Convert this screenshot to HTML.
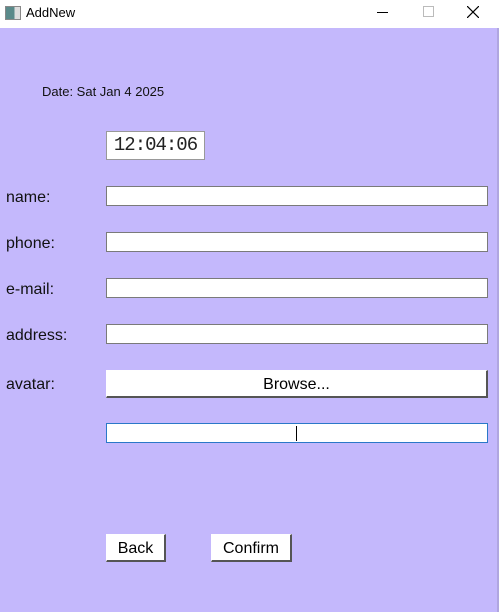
<!DOCTYPE html><html><head><style>
body{margin:0;width:499px;height:612px;background:#c4b8fc;font-family:"Liberation Sans",sans-serif;position:relative;overflow:hidden}
.a{position:absolute}
.t{left:0;top:0;width:499px;height:28px;background:#fff}
.l{font-size:16px;color:#111;left:6px}
.in{left:106px;width:380px;height:18px;background:#fff;border:1px solid #7a7a7a}
.btn{background:#fff;border:1px solid #fff;border-right:2px solid #555;border-bottom:2px solid #555;box-sizing:border-box;font-size:16px;text-align:center;color:#000}
</style></head><body>
<div class="a t"></div>
<div class="a" style="left:5px;top:6px;width:14px;height:12px;border:1px solid #888;background:linear-gradient(90deg,#5a8a8a 60%,#ddd 60%)"></div>
<div class="a" style="left:26px;top:5px;font-size:13px">AddNew</div>
<div class="a" style="left:377px;top:12px;width:11px;height:1px;background:#000"></div>
<div class="a" style="left:423px;top:6px;width:9px;height:9px;border:1px solid #bbb"></div>
<svg class="a" style="left:467px;top:6px" width="12" height="12"><path d="M0 0L12 12M12 0L0 12" stroke="#000" stroke-width="1.2"/></svg>
<div class="a" style="left:497px;top:28px;width:2px;height:584px;background:#b0a6e0"></div>
<div class="a" style="left:42px;top:84px;font-size:13px;color:#111">Date: Sat Jan 4 2025</div>
<div class="a" style="left:106px;top:131px;width:99px;height:29px;background:#fff;border:1px solid #999;box-sizing:border-box;font-family:'Liberation Mono',monospace;font-size:19px;line-height:27px;text-align:center;letter-spacing:-1px;color:#222;overflow:hidden">12:04:06</div>
<div class="a l" style="top:189px">name:</div><div class="a in" style="top:186px"></div>
<div class="a l" style="top:235px">phone:</div><div class="a in" style="top:232px"></div>
<div class="a l" style="top:281px">e-mail:</div><div class="a in" style="top:278px"></div>
<div class="a l" style="top:327px">address:</div><div class="a in" style="top:324px"></div>
<div class="a l" style="top:376px">avatar:</div>
<div class="a btn" style="left:106px;top:370px;width:382px;height:28px;line-height:27px">Browse...</div>
<div class="a in" style="top:423px;border-color:#2a78c8"></div>
<div class="a" style="left:296px;top:426px;width:1px;height:15px;background:#000"></div>
<div class="a btn" style="left:106px;top:534px;width:60px;height:28px;line-height:27px">Back</div>
<div class="a btn" style="left:211px;top:534px;width:81px;height:28px;line-height:27px">Confirm</div>
</body></html>
